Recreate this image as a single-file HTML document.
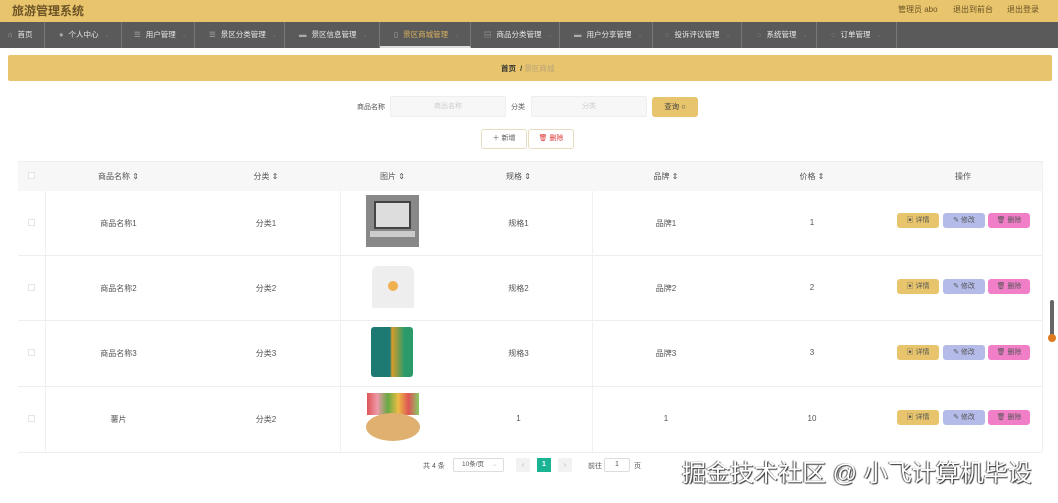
<!DOCTYPE html><html><head><meta charset="utf-8"><style>
*{box-sizing:border-box;margin:0;padding:0}
body{width:1058px;height:503px;overflow:hidden;background:#fff;font-family:"Liberation Sans","Noto Sans CJK SC",sans-serif;font-size:8px;color:#555;position:relative}
.a{position:absolute}
.hdr{left:0;top:0;width:1058px;height:22px;background:#e8c56c}
.nav{left:0;top:22px;width:1058px;height:26px;background:#5b5a5a}
.ni{position:absolute;top:0;height:26px;line-height:26px;color:#e8e8e8;font-size:7.5px;border-right:1px solid #777;padding-left:8px}
.ni i{font-style:normal;color:#aaa;margin-right:5px}
.ni b{font-weight:normal;color:#8a6a6a;margin-left:6px;font-size:6px}
.c{text-align:center}
.btn{position:absolute;height:15px;width:42px;border-radius:3px;font-size:7px;line-height:15px;text-align:center;color:#555}
.hl{position:absolute;left:18px;width:1024px;height:1px;background:#eee}
.vl{position:absolute;width:1px;background:#f0f0f0}
</style></head><body>
<div class="a hdr"></div>
<div class="a" style="left:12px;top:2px;font-size:12px;font-weight:bold;color:#6b5326">旅游管理系统</div>
<div class="a" style="left:898px;top:4px;font-size:8px;color:#6b5326">管理员 abo</div>
<div class="a" style="left:953px;top:4px;font-size:8px;color:#6b5326">退出到前台</div>
<div class="a" style="left:1007px;top:4px;font-size:8px;color:#6b5326">退出登录</div>
<div class="a nav">
<div class="ni" style="left:0;width:45px"><i>⌂</i>首页</div>
<div class="ni" style="left:45px;width:77px;padding-left:14px"><i>●</i>个人中心<b>⌄</b></div>
<div class="ni" style="left:122px;width:73px;padding-left:12px"><i>☰</i>用户管理<b>⌄</b></div>
<div class="ni" style="left:195px;width:90px;padding-left:14px"><i>☰</i>景区分类管理<b>⌄</b></div>
<div class="ni" style="left:285px;width:95px;padding-left:14px"><i>▬</i>景区信息管理<b>⌄</b></div>
<div class="ni" style="left:380px;width:91px;padding-left:14px;color:#d8b05a;border-bottom:2px solid #ddd"><i>▯</i>景区商城管理<b>⌄</b></div>
<div class="ni" style="left:471px;width:89px;padding-left:13px"><i>▤</i>商品分类管理<b>⌄</b></div>
<div class="ni" style="left:560px;width:93px;padding-left:14px"><i>▬</i>用户分享管理<b>⌄</b></div>
<div class="ni" style="left:653px;width:89px;padding-left:12px"><i>◌</i>投诉评议管理<b>⌄</b></div>
<div class="ni" style="left:742px;width:75px;padding-left:15px"><i>◌</i>系统管理<b>⌄</b></div>
<div class="ni" style="left:817px;width:80px;padding-left:14px"><i>◌</i>订单管理<b>⌄</b></div>
</div>
<div class="a" style="left:8px;top:55px;width:1044px;height:26px;background:#e8c56c;border-radius:2px"></div>
<div class="a" style="left:501px;top:63px;font-size:7.5px;color:#333;font-weight:bold">首页 &nbsp;/ <span style="font-weight:normal;color:#b9a27a">景区商城</span></div>

<div class="a" style="left:357px;top:102px;font-size:7px;color:#555">商品名称</div>
<div class="a c" style="left:390px;top:96px;width:116px;height:21px;border:1px solid #eee;background:#f7f7f7;border-radius:2px;line-height:19px;color:#ccc;font-size:7px">商品名称</div>
<div class="a" style="left:511px;top:102px;font-size:7px">分类</div>
<div class="a c" style="left:531px;top:96px;width:116px;height:21px;border:1px solid #eee;background:#f7f7f7;border-radius:2px;line-height:19px;color:#ccc;font-size:7px">分类</div>
<div class="a c" style="left:652px;top:97px;width:46px;height:20px;background:#e8c56c;border-radius:3px;line-height:20px;font-size:7.5px;color:#444">查询 ○</div>
<div class="a c" style="left:481px;top:129px;width:46px;height:20px;border:1px solid #e8dcc0;border-radius:3px;line-height:18px;font-size:7px">＋ 新增</div>
<div class="a c" style="left:528px;top:129px;width:46px;height:20px;border:1px solid #e8dcc0;border-radius:3px;line-height:18px;font-size:7px;color:#d33">🗑 删除</div>

<div class="a" style="left:18px;top:161px;width:1024px;height:30px;background:#f7f7f7;border-top:1px solid #eee"></div>
<div class="a" style="left:28px;top:172px;width:7px;height:7px;border:1px solid #e5e5e5;background:#fff"></div>
<div class="a c" style="left:45px;top:171px;width:147px">商品名称 ⇕</div>
<div class="a c" style="left:192px;top:171px;width:148px">分类 ⇕</div>
<div class="a c" style="left:340px;top:171px;width:105px">图片 ⇕</div>
<div class="a c" style="left:445px;top:171px;width:147px">规格 ⇕</div>
<div class="a c" style="left:592px;top:171px;width:148px">品牌 ⇕</div>
<div class="a c" style="left:740px;top:171px;width:144px">价格 ⇕</div>
<div class="a c" style="left:884px;top:171px;width:158px">操作</div>
<div class="hl" style="top:255px"></div><div class="hl" style="top:320px"></div><div class="hl" style="top:386px"></div><div class="hl" style="top:452px"></div>
<div class="vl" style="left:45px;top:191px;height:261px"></div>
<div class="vl" style="left:340px;top:191px;height:261px"></div>
<div class="vl" style="left:592px;top:191px;height:261px"></div>
<div class="vl" style="left:1042px;top:161px;height:291px"></div>

<div class="a" style="left:0;top:191px">
<div class="a" style="left:28px;top:28px;width:7px;height:7px;border:1px solid #e5e5e5"></div>
<div class="a c" style="left:45px;top:27px;width:147px">商品名称1</div><div class="a c" style="left:192px;top:27px;width:148px">分类1</div>
<div class="a" style="left:366px;top:4px;width:53px;height:52px;background:#888"><div class="a" style="left:8px;top:6px;width:37px;height:28px;background:#ddd;border:2px solid #444"></div><div class="a" style="left:4px;top:36px;width:45px;height:6px;background:#ccc"></div></div>
<div class="a c" style="left:445px;top:27px;width:147px">规格1</div><div class="a c" style="left:592px;top:27px;width:148px">品牌1</div><div class="a c" style="left:740px;top:27px;width:144px">1</div>
</div>
<div class="a" style="left:0;top:256px">
<div class="a" style="left:28px;top:28px;width:7px;height:7px;border:1px solid #e5e5e5"></div>
<div class="a c" style="left:45px;top:27px;width:147px">商品名称2</div><div class="a c" style="left:192px;top:27px;width:148px">分类2</div>
<div class="a" style="left:372px;top:10px;width:42px;height:42px;background:#eee;border-radius:6px 6px 2px 2px"><div class="a" style="left:16px;top:15px;width:10px;height:10px;background:#f0b050;border-radius:50%"></div></div>
<div class="a c" style="left:445px;top:27px;width:147px">规格2</div><div class="a c" style="left:592px;top:27px;width:148px">品牌2</div><div class="a c" style="left:740px;top:27px;width:144px">2</div>
</div>
<div class="a" style="left:0;top:321px">
<div class="a" style="left:28px;top:28px;width:7px;height:7px;border:1px solid #e5e5e5"></div>
<div class="a c" style="left:45px;top:27px;width:147px">商品名称3</div><div class="a c" style="left:192px;top:27px;width:148px">分类3</div>
<div class="a" style="left:371px;top:6px;width:42px;height:50px;background:linear-gradient(90deg,#1d7a72 0,#1d7a72 45%,#d79a2a 50%,#2a9a6a 80%);border-radius:3px"></div>
<div class="a c" style="left:445px;top:27px;width:147px">规格3</div><div class="a c" style="left:592px;top:27px;width:148px">品牌3</div><div class="a c" style="left:740px;top:27px;width:144px">3</div>
</div>
<div class="a" style="left:0;top:387px">
<div class="a" style="left:28px;top:28px;width:7px;height:7px;border:1px solid #e5e5e5"></div>
<div class="a c" style="left:45px;top:27px;width:147px">薯片</div><div class="a c" style="left:192px;top:27px;width:148px">分类2</div>
<div class="a" style="left:367px;top:6px;width:52px;height:22px;background:linear-gradient(90deg,#d55 0,#e9a 20%,#6a4 40%,#eb4 60%,#d55 80%,#8c6)"></div>
<div class="a" style="left:366px;top:26px;width:54px;height:28px;background:#e0b070;border-radius:50%"></div>
<div class="a c" style="left:445px;top:27px;width:147px">1</div><div class="a c" style="left:592px;top:27px;width:148px">1</div><div class="a c" style="left:740px;top:27px;width:144px">10</div>
</div>

<div class="btn" style="left:897px;top:213px;background:#e8c56c">▣ 详情</div><div class="btn" style="left:943px;top:213px;background:#b5bbe8">✎ 修改</div><div class="btn" style="left:988px;top:213px;background:#f07fc8">🗑 删除</div>
<div class="btn" style="left:897px;top:279px;background:#e8c56c">▣ 详情</div><div class="btn" style="left:943px;top:279px;background:#b5bbe8">✎ 修改</div><div class="btn" style="left:988px;top:279px;background:#f07fc8">🗑 删除</div>
<div class="btn" style="left:897px;top:345px;background:#e8c56c">▣ 详情</div><div class="btn" style="left:943px;top:345px;background:#b5bbe8">✎ 修改</div><div class="btn" style="left:988px;top:345px;background:#f07fc8">🗑 删除</div>
<div class="btn" style="left:897px;top:410px;background:#e8c56c">▣ 详情</div><div class="btn" style="left:943px;top:410px;background:#b5bbe8">✎ 修改</div><div class="btn" style="left:988px;top:410px;background:#f07fc8">🗑 删除</div>

<div class="a" style="left:423px;top:461px;font-size:7px">共 4 条</div>
<div class="a" style="left:453px;top:458px;width:51px;height:14px;border:1px solid #ddd;border-radius:2px;font-size:6.5px;line-height:12px;padding-left:8px">10条/页 <span style="color:#ccc;margin-left:6px">⌄</span></div>
<div class="a c" style="left:516px;top:458px;width:14px;height:14px;background:#f2f2f2;color:#bbb;line-height:14px">‹</div>
<div class="a c" style="left:537px;top:458px;width:14px;height:14px;background:#1ab394;color:#fff;line-height:14px;font-weight:bold;font-size:7px">1</div>
<div class="a c" style="left:558px;top:458px;width:14px;height:14px;background:#f2f2f2;color:#bbb;line-height:14px">›</div>
<div class="a" style="left:588px;top:461px;font-size:7px">前往</div>
<div class="a c" style="left:604px;top:458px;width:26px;height:14px;border:1px solid #ddd;border-radius:2px;line-height:12px;font-size:7px">1</div>
<div class="a" style="left:634px;top:461px;font-size:7px">页</div>
<div class="a" style="left:682px;top:453px;font-size:24px;color:#fff;text-shadow:1px 1px 1px #333,-1px 0 1px #555;white-space:nowrap">掘金技术社区 @ 小飞计算机毕设</div>
<div class="a" style="left:1050px;top:300px;width:4px;height:40px;background:#666;border-radius:2px"></div>
<div class="a" style="left:1048px;top:334px;width:8px;height:8px;background:#e07a20;border-radius:50%"></div>
</body></html>
